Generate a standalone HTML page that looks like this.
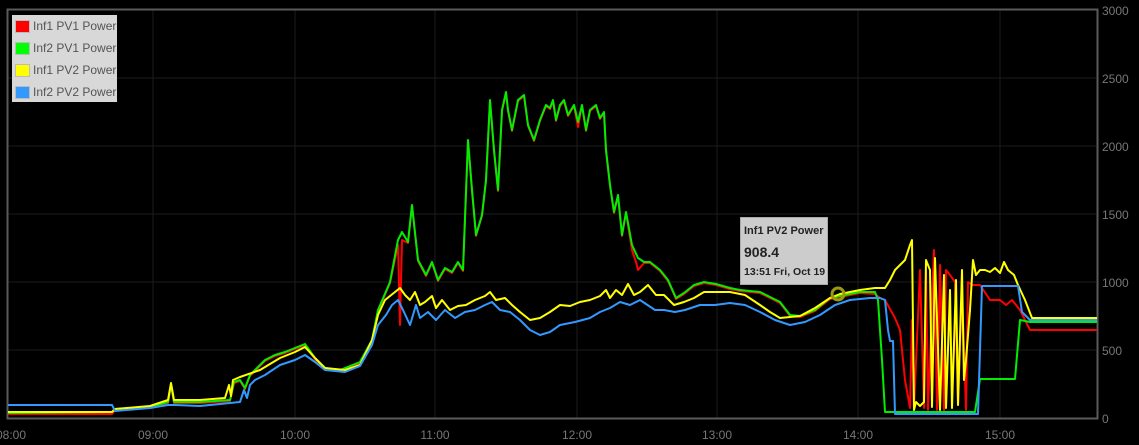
<!DOCTYPE html>
<html><head><style>
body{margin:0;background:#000;width:1139px;height:445px;overflow:hidden;font-family:"Liberation Sans",sans-serif}
svg{position:absolute;left:0;top:0}
.leg{position:absolute;left:12px;top:15px;width:105px;height:87px;background:#d8d8d8;font-size:12px;color:#545454}
.leg div{height:22px;line-height:22px;position:relative;padding-left:21px}
.leg span{position:absolute;left:3px;top:5px;width:13px;height:11px;border:1px solid #bbb}
.tip{position:absolute;left:740px;top:217px;width:86px;height:66px;background:#ccc;border:1px solid #aaa;color:#222;font-size:11px;font-weight:bold}
</style></head><body>
<svg width="1139" height="445">
<g stroke="#1c1c1c" stroke-width="1">
<line x1="8" y1="78" x2="1096" y2="78"/><line x1="8" y1="146" x2="1096" y2="146"/><line x1="8" y1="214" x2="1096" y2="214"/><line x1="8" y1="282" x2="1096" y2="282"/><line x1="8" y1="350" x2="1096" y2="350"/>
<line x1="153" y1="10" x2="153" y2="418"/><line x1="295" y1="10" x2="295" y2="418"/><line x1="435" y1="10" x2="435" y2="418"/><line x1="577" y1="10" x2="577" y2="418"/><line x1="717" y1="10" x2="717" y2="418"/><line x1="858" y1="10" x2="858" y2="418"/><line x1="1000" y1="10" x2="1000" y2="418"/>
</g>
<rect x="7.5" y="9.5" width="1090" height="409" fill="none" stroke="#5a5a5a" stroke-width="2"/>
<g fill="none" stroke-width="2" stroke-linejoin="round">
<polyline stroke="#ff0000" points="8,414 112,414 115,410 150,408 168,403 171,385 174,403 200,403 230,401 234,383 240,381 245,389 250,376 265,361 275,356 285,353 295,349 305,345 315,359 325,369 340,371 360,363 372,341 378,311 390,283 398,245 400,325 402,240 408,243 412,206 418,261 426,276 432,263 438,281 445,269 452,273 458,263 463,271 468,141 472,191 476,236 482,216 486,181 490,101 494,151 498,191 502,111 506,93 508,111 512,131 518,101 524,96 528,126 534,141 540,121 546,106 550,109 553,101 556,121 560,106 564,101 568,116 574,106 578,127 582,106 586,131 590,111 596,106 600,119 604,113 606,151 610,186 614,213 618,196 622,236 626,213 632,250 636,262 638,270 644,263 650,263 660,271 668,281 676,299 684,294 694,286 704,283 716,285 730,289 740,291 760,293 780,303 790,316 800,317 815,311 830,299 845,296 860,293 875,294 880,298 885,300 895,318 900,330 905,380 910,408 912,320 914,408 920,270 924,408 926,270 928,410 934,250 937,410 940,265 944,410 946,270 950,275 955,282 958,405 962,290 966,410 968,282 972,285 980,285 990,300 1000,300 1006,305 1012,300 1020,310 1030,330 1097,330"/>
<polyline stroke="#00ee00" points="8,413 112,412 115,409 150,407 168,402 171,384 174,402 200,402 230,400 234,382 240,380 245,388 250,375 265,360 275,355 285,352 295,348 305,344 315,358 325,368 340,370 360,362 372,340 378,310 390,282 398,240 402,232 408,242 412,205 418,260 426,275 432,262 438,280 445,268 452,272 458,262 463,270 468,140 472,190 476,235 482,215 486,180 490,100 494,150 498,190 502,110 506,92 508,110 512,130 518,100 524,95 528,125 534,140 540,120 546,105 550,108 553,100 556,120 560,105 564,100 568,115 574,105 578,122 582,105 586,130 590,110 596,105 600,118 604,112 606,150 610,185 614,212 618,195 622,235 626,212 632,245 638,258 644,262 650,262 660,270 668,280 676,298 684,293 694,285 704,282 716,284 730,288 740,290 760,292 780,302 790,315 800,316 815,310 830,298 845,295 860,292 875,292 878,300 882,360 885,412 888,412 975,412 980,379 1015,379 1020,320 1030,322 1097,322"/>
<polyline stroke="#ffff00" points="8,412 112,412 115,409 150,406 168,400 171,383 174,400 200,400 225,398 229,385 231,396 233,380 240,377 260,370 280,358 295,352 305,347 315,358 325,368 345,370 360,365 372,340 378,315 385,300 395,292 400,288 405,295 410,300 415,292 420,305 425,302 432,296 436,308 442,300 450,310 458,306 466,305 475,300 485,296 490,292 496,300 505,298 512,305 520,312 530,320 540,318 550,312 560,305 570,306 580,302 590,300 600,296 606,290 610,298 616,290 622,295 628,284 634,295 640,292 648,285 656,295 664,295 674,305 684,302 694,298 704,292 716,292 730,292 745,295 760,305 770,312 780,318 800,316 815,308 830,298 840,294 860,290 875,288 885,288 890,280 895,270 905,260 910,245 912,240 914,410 916,402 920,406 924,402 926,260 930,270 932,407 935,258 940,410 944,275 946,408 950,290 952,408 956,280 958,405 962,270 964,380 966,360 970,310 973,260 976,275 980,270 985,270 990,272 995,268 1000,273 1004,262 1008,270 1014,275 1018,285 1025,300 1032,318 1097,318"/>
<polyline stroke="#3399ff" points="8,405 112,405 115,411 150,408 168,405 175,405 200,406 240,402 244,390 247,398 250,385 255,380 265,375 280,365 295,360 305,355 315,362 325,370 345,372 360,366 372,345 378,325 386,315 392,305 398,300 403,310 410,325 416,305 420,318 428,312 436,320 445,310 455,318 465,312 475,310 485,305 492,302 500,310 510,312 520,320 530,330 540,335 550,332 560,325 575,322 590,318 600,312 610,308 620,302 630,305 640,300 655,310 664,310 675,312 685,310 700,305 715,305 730,303 745,305 760,312 775,320 790,325 805,322 820,315 835,305 850,300 870,298 880,298 885,300 888,330 890,341 893,341 895,414 978,414 982,286 1018,286 1022,312 1030,320 1097,320"/>
</g>
<circle cx="838" cy="294" r="6" fill="none" stroke="#9a9a10" stroke-width="3"/>
<g fill="#777" font-size="12" font-family="Liberation Sans,sans-serif">
<text x="1102" y="15">3000</text><text x="1102" y="83">2500</text><text x="1102" y="151">2000</text><text x="1102" y="219">1500</text><text x="1102" y="287">1000</text><text x="1102" y="355">500</text><text x="1102" y="423">0</text>
<g text-anchor="middle"><text x="11" y="439">08:00</text><text x="153" y="439">09:00</text><text x="295" y="439">10:00</text><text x="435" y="439">11:00</text><text x="577" y="439">12:00</text><text x="717" y="439">13:00</text><text x="858" y="439">14:00</text><text x="1000" y="439">15:00</text></g>
</g>
</svg>
<div class="leg">
<div><span style="background:#f00"></span>Inf1 PV1 Power</div>
<div><span style="background:#0f0"></span>Inf2 PV1 Power</div>
<div><span style="background:#ff0"></span>Inf1 PV2 Power</div>
<div><span style="background:#3399ff"></span>Inf2 PV2 Power</div>
</div>
<div class="tip">
<div style="position:absolute;left:3px;top:7px">Inf1 PV2 Power</div>
<div style="position:absolute;left:3px;top:26px;font-size:14px">908.4</div>
<div style="position:absolute;left:3px;top:48px;font-size:10.5px">13:51 Fri, Oct 19</div>
</div>
</body></html>
